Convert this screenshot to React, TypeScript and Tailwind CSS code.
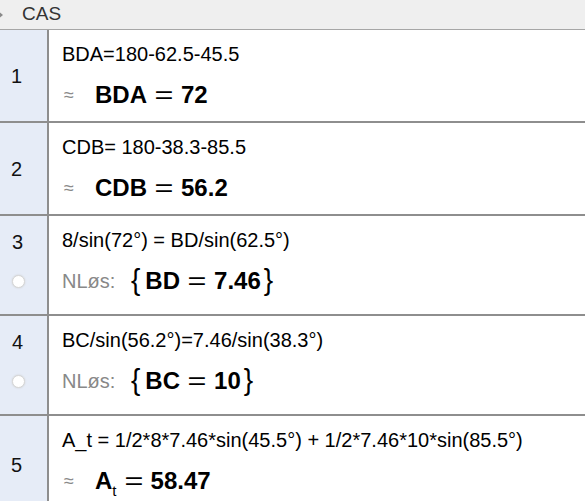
import React from "react";

const font = { fontFamily: '"Liberation Sans", Arial, sans-serif' };

function Approx() {
  return <span className="text-[18px] text-[#8a8a8a] w-[33px] inline-block pl-[2px]">≈</span>;
}

function Eq() {
  return <span className="font-normal inline-block mx-[10px] scale-x-[1.35]">=</span>;
}

function Brace({ c, side }: { c: string; side: "l" | "r" }) {
  return (
    <span className={`font-normal text-[28px] leading-none inline-block scale-y-[1.05] ${side === "l" ? "ml-[2px] mr-[5px]" : "ml-[3px]"}`}>
      {c}
    </span>
  );
}

function Row({
  n,
  h,
  input,
  output,
  circle,
}: {
  n: string;
  h: string;
  input: React.ReactNode;
  output: React.ReactNode;
  circle?: boolean;
}) {
  return (
    <div className={`flex border-b-2 border-[#8e8e8e] ${h}`}>
      <div className="w-[49px] shrink-0 bg-[#e6ecf7] border-r-2 border-[#8e8e8e] relative">
        {circle ? (
          <div className="flex flex-col pl-[12px] pt-[14px]">
            <span className="text-[20px] leading-[24px] text-[#111]">{n}</span>
            <span className="mt-[21px] ml-[0px] w-[13px] h-[13px] rounded-full bg-white border border-[#d6d6d6] shadow-[0_0_2px_#ccc]"></span>
          </div>
        ) : (
          <div className="h-full flex items-center pl-[11px] text-[20px] text-[#111]">{n}</div>
        )}
      </div>
      <div className="flex-1 pl-[13px] flex flex-col">
        <div className="text-[20px] leading-[24px] text-black mt-[12px] whitespace-nowrap">{input}</div>
        <div className="flex items-center h-[40px] mt-[9px] whitespace-nowrap">{output}</div>
      </div>
    </div>
  );
}

export default function App() {
  return (
    <div className="w-[585px] h-[501px] overflow-hidden bg-white" style={font}>
      <div className="h-[30px] bg-[#efefef] border-b border-[#a6a6a6] flex items-center">
        <div className="w-0 h-0 border-y-[4px] border-y-transparent border-l-[5px] border-l-[#8a8a8a] ml-[-2px] mr-[19px]"></div>
        <span className="text-[19px] text-[#333]">CAS</span>
      </div>
      <Row
        n="1"
        h="h-[93px]"
        input="BDA=180-62.5-45.5"
        output={
          <>
            <Approx />
            <span className="text-[24px] font-bold text-black">
              BDA<Eq />72
            </span>
          </>
        }
      />
      <Row
        n="2"
        h="h-[93px]"
        input="CDB= 180-38.3-85.5"
        output={
          <>
            <Approx />
            <span className="text-[24px] font-bold text-black">
              CDB<Eq />56.2
            </span>
          </>
        }
      />
      <Row
        n="3"
        h="h-[100px]"
        circle
        input="8/sin(72°) = BD/sin(62.5°)"
        output={
          <>
            <span className="text-[20px] text-[#888] w-[67px]">NLøs:</span>
            <span className="text-[24px] font-bold text-black flex items-center">
              <Brace c="{" side="l" />BD<Eq />7.46<Brace c="}" side="r" />
            </span>
          </>
        }
      />
      <Row
        n="4"
        h="h-[100px]"
        circle
        input="BC/sin(56.2°)=7.46/sin(38.3°)"
        output={
          <>
            <span className="text-[20px] text-[#888] w-[67px]">NLøs:</span>
            <span className="text-[24px] font-bold text-black flex items-center">
              <Brace c="{" side="l" />BC<Eq />10<Brace c="}" side="r" />
            </span>
          </>
        }
      />
      <Row
        n="5"
        h="h-[100px]"
        input="A_t = 1/2*8*7.46*sin(45.5°) + 1/2*7.46*10*sin(85.5°)"
        output={
          <>
            <Approx />
            <span className="text-[24px] font-bold text-black">
              A<sub className="text-[15px] font-normal align-[-3px]">t</sub>
              <Eq />58.47
            </span>
          </>
        }
      />
    </div>
  );
}
